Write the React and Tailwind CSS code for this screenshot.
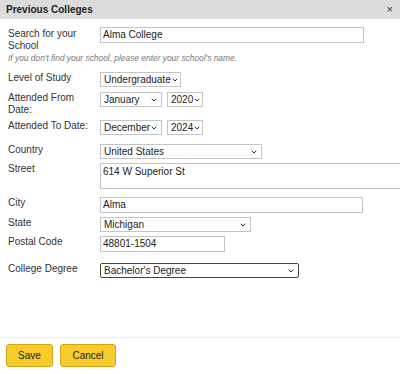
import { ChevronDown } from "lucide-react";

const Select = ({ value, width, dark }) => (
    <div
        className={`flex items-center justify-between h-[15px] pl-[3px] pr-[3px] bg-white border ${dark ? "border-[#444] rounded-[2px]" : "border-[#c4c4c4]"} ${width}`}
    >
        <span className="text-[10px] leading-none text-[#222] whitespace-nowrap">{value}</span>
        <ChevronDown size={8} strokeWidth={3} className="text-[#333] shrink-0" />
    </div>
);

const Input = ({ value, width }) => (
    <div className={`h-[16px] flex items-center px-[2px] bg-white border border-[#c4c4c4] ${width}`}>
        <span className="text-[10px] leading-none text-[#222]">{value}</span>
    </div>
);

const Row = ({ label, children, className = "" }) => (
    <div className={`flex items-start ${className}`}>
        <div className="w-[92px] shrink-0 text-[10px] leading-[12px] text-[#333]">{label}</div>
        <div className="flex gap-[5px]">{children}</div>
    </div>
);

const App = () => {
    return (
        <div
            className="w-[400px] h-[374px] bg-white flex flex-col overflow-hidden"
            style={{ fontFamily: '"Liberation Sans", Arial, sans-serif' }}
        >
            <div className="h-[19px] bg-[#dcdcdc] flex items-center justify-between pl-[6px] pr-[7px]">
                <span className="text-[10px] font-bold text-[#222]">Previous Colleges</span>
                <span className="text-[11px] text-[#333] leading-none">×</span>
            </div>

            <div className="flex-1 pl-[8px] pt-[8px]">
                <Row label={<span className="block pt-[1px]">Search for your School</span>}>
                    <Input value="Alma College" width="w-[264px]" />
                </Row>
                <p className="text-[8.4px] leading-[12px] italic text-[#777]">
                    If you don't find your school, please enter your school's name.
                </p>

                <Row label="Level of Study" className="mt-[8px]">
                    <Select value="Undergraduate" width="w-[81px]" />
                </Row>

                <Row label="Attended From Date:" className="mt-[5px]">
                    <Select value="January" width="w-[62px]" />
                    <Select value="2020" width="w-[36px]" />
                </Row>

                <Row label="Attended To Date:" className="mt-[4px]">
                    <Select value="December" width="w-[62px]" />
                    <Select value="2024" width="w-[36px]" />
                </Row>

                <Row label="Country" className="mt-[9px]">
                    <Select value="United States" width="w-[162px]" />
                </Row>

                <Row label="Street" className="mt-[4px]">
                    <div className="w-[310px] h-[26px] px-[2px] pt-[2px] border border-[#c4c4c4] text-[10px] leading-[12px] text-[#222]">
                        614 W Superior St
                    </div>
                </Row>

                <Row label="City" className="mt-[8px]">
                    <Input value="Alma" width="w-[263px]" />
                </Row>

                <Row label="State" className="mt-[4px]">
                    <Select value="Michigan" width="w-[151px]" />
                </Row>

                <Row label="Postal Code" className="mt-[4px]">
                    <Input value="48801-1504" width="w-[125px]" />
                </Row>

                <Row label="College Degree" className="mt-[11px]">
                    <Select value="Bachelor's Degree" width="w-[199px]" dark />
                </Row>
            </div>

            <div className="border-t border-[#ececec] h-[37px] flex items-start gap-[7px] pl-[6px] pt-[6px]">
                <button className="w-[47px] h-[23px] rounded-[3px] bg-[#f6cb2b] border border-[#cfa718] text-[10px] text-[#222]">
                    Save
                </button>
                <button className="w-[56px] h-[23px] rounded-[3px] bg-[#f6cb2b] border border-[#cfa718] text-[10px] text-[#222]">
                    Cancel
                </button>
            </div>
        </div>
    );
};

export default App;
